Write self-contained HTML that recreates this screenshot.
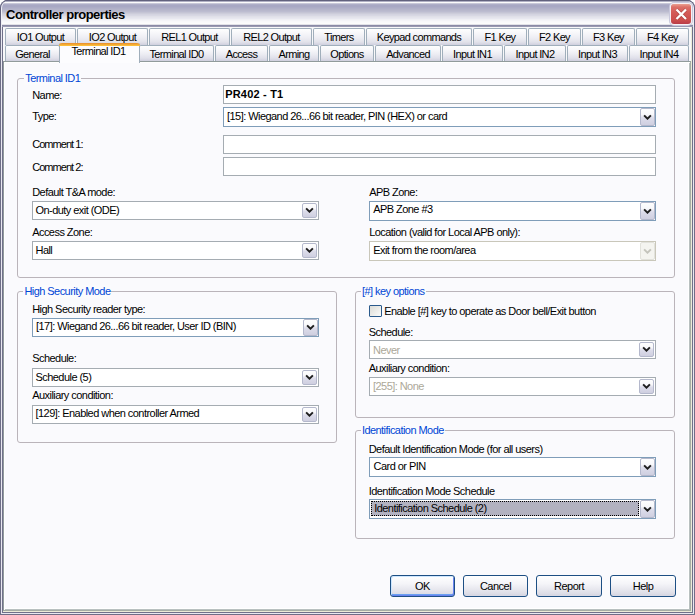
<!DOCTYPE html><html><head><meta charset="utf-8"><title>Controller properties</title><style>
*{margin:0;padding:0;box-sizing:border-box}
html,body{width:695px;height:615px;overflow:hidden;background:#fff}
body{position:relative;font-family:"Liberation Sans",sans-serif}
.t{position:absolute;font-size:11px;line-height:13px;letter-spacing:-0.55px;white-space:pre;color:#000}
.gt{color:#0046d5;background:#fbfbfd;padding:0 1px 0 1px}
.box{position:absolute;border:1px solid #a5acb2;background:#fff}
.box > *{position:absolute}
.dbtn{border:1px solid #b4b8cc;border-radius:2px;background:linear-gradient(#fefefe 0%,#f8f8fb 35%,#dcdcea 55%,#cfcfe0 100%)}
.dbtn.dis{border-color:#e2e2dc;background:#f4f4f0}
.csel{background:#b2b2c0;outline:1px dotted #000;outline-offset:-1px}
.grp{position:absolute;border:1px solid #bab4ba;border-radius:3px}
.btn{position:absolute;border:1px solid #1d4f84;border-radius:3px;background:linear-gradient(#ffffff 0%,#f4f4f8 40%,#dcdce6 90%,#cfcfdc 100%);box-shadow:inset 0 -1px 0 #d8d8e4}
.btn span{position:absolute;left:0;right:0;top:4px;text-align:center;font-size:11px;line-height:13px;letter-spacing:-0.5px}
.btn.def{box-shadow:inset 1px 1px 0 #cee7ff,inset -1px -1px 0 #6982ee,inset 0 -2px 0 #69a0f0}
.tab{position:absolute;border:1px solid #a0aebb;border-bottom:none;border-radius:2px 2px 0 0}
.tab span{position:absolute;left:0;right:0;text-align:center;font-size:11px;line-height:13px;letter-spacing:-0.65px;white-space:pre}
.tab.r1{top:28px;height:17px;background:linear-gradient(#fefefe 0px,#f7f7fa 4px,#ededf3 9px,#e2e2ea 13px,#cfcfde 16px)}
.tab.r1 span{top:2px}
.tab.r2{top:45px;height:16px;background:linear-gradient(#fefefe 0px,#f7f7fa 4px,#ededf3 8px,#e0e0ea 12px,#cfcfde 15px)}
.tab.r2 span{top:2px}
.tab.sel span{top:2.4px;right:2px}
.tab.sel{top:43px;height:20px;background:#fcfcfe;border-color:#a0aebb;border-top:none;z-index:3}
.tab.sel:before{content:"";position:absolute;left:-1px;right:-1px;top:0;height:3px;background:linear-gradient(#e68b2c,#ffc73c);border-radius:3px 3px 0 0}
</style></head><body>
<div style="position:absolute;left:0;top:0;width:695px;height:615px;background:#6e6e86;border-radius:8px 8px 0 0"></div>
<div style="position:absolute;left:1px;top:1px;width:693px;height:613px;background:#e8e8f0;border-radius:7px 7px 0 0"></div>
<div style="position:absolute;left:2px;top:2px;width:691px;height:611px;background:#70708a;border-radius:6px 6px 0 0"></div>
<div style="position:absolute;left:0px;top:0px;width:695px;height:27px;border-radius:8px 8px 0 0;background:linear-gradient(#5a5a78 0px 1px,#b0b0c4 1px 2px,#fbfbfc 2px 3px,#c8c8d8 3px 4px,#aeaec8 4px 5px,#a8a8c4 5px 6px,#a8a8c4 6px 7px,#acacc6 7px 8px,#b0b0c8 8px 9px,#b4b4ca 9px 10px,#b8b8cc 10px 11px,#bcbcd0 11px 12px,#c4c4d4 12px 13px,#ccccda 13px 14px,#d4d4e0 14px 15px,#d8d8e4 15px 16px,#e0e0e8 16px 17px,#e4e4ec 17px 18px,#e8e8f0 18px 19px,#f0f0f4 19px 20px,#f4f4f8 20px 21px,#f8f8fa 21px 22px,#fafafc 22px 23px,#fcfcfc 23px 24px,#e2e2e8 24px 25px,#8a8aa6 25px 26px,#9a9ab2 26px 27px)"></div>
<div style="position:absolute;left:0;top:0;width:695px;height:27px;border:1px solid #62627e;border-bottom:none;border-radius:8px 8px 0 0"></div>
<div style="position:absolute;left:1px;top:1px;width:693px;height:26px;border:1px solid #f0f0f6;border-bottom:none;border-top:none;border-radius:7px 7px 0 0"></div>
<div style="position:absolute;left:6px;top:6.5px;font-size:13px;line-height:16px;letter-spacing:-0.5px;font-weight:bold;color:#000;white-space:pre">Controller properties</div>
<div style="position:absolute;left:671px;top:4px;width:20px;height:20px;border-radius:3px;background:linear-gradient(#eba090 0px,#dc7068 3px,#d45c58 8px,#cc4e4c 16px,#b83c48 20px);box-shadow:0 0 0 1px #f6f0f4,0 0 0 2px #c8c8dc"></div>
<svg style="position:absolute;left:671px;top:4px" width="20" height="20"><path d="M5.5 5.5 L15 15 M15 5.5 L5.5 15" stroke="#6a2020" stroke-opacity="0.35" stroke-width="3.4"/><path d="M5.5 5.5 L15 15 M15 5.5 L5.5 15" stroke="#fff" stroke-width="2.3"/></svg>
<div style="position:absolute;left:3px;top:27px;width:689px;height:585px;background:#f8f8fa"></div>
<div style="position:absolute;left:691px;top:27px;width:1px;height:585px;background:#ecebd8"></div>
<div style="position:absolute;left:3px;top:611px;width:689px;height:1px;background:#ecebd8"></div>
<div style="position:absolute;left:3px;top:61px;width:688px;height:550px;border:1px solid #919b9c;border-right:1px solid #a4aca4;border-bottom:1px solid #a4aca4;background:#fafafd;box-shadow:inset 1px 1px 0 #fff,inset -1px -1px 0 #b8c0c0,inset -2px -2px 0 #fff"></div>
<div class="tab r1" style="left:5px;width:71px"><span>IO1 Output</span></div>
<div class="tab r1" style="left:77px;width:71px"><span>IO2 Output</span></div>
<div class="tab r1" style="left:149px;width:81px"><span>REL1 Output</span></div>
<div class="tab r1" style="left:231px;width:81px"><span>REL2 Output</span></div>
<div class="tab r1" style="left:313px;width:52px"><span>Timers</span></div>
<div class="tab r1" style="left:366px;width:106px"><span>Keypad commands</span></div>
<div class="tab r1" style="left:473px;width:54px"><span>F1 Key</span></div>
<div class="tab r1" style="left:528px;width:53px"><span>F2 Key</span></div>
<div class="tab r1" style="left:582px;width:53px"><span>F3 Key</span></div>
<div class="tab r1" style="left:636px;width:53px"><span>F4 Key</span></div>
<div class="tab r2" style="left:5px;width:55px"><span>General</span></div>
<div class="tab r2" style="left:139px;width:75px"><span>Terminal ID0</span></div>
<div class="tab r2" style="left:215px;width:53px"><span>Access</span></div>
<div class="tab r2" style="left:269px;width:50px"><span>Arming</span></div>
<div class="tab r2" style="left:320px;width:54px"><span>Options</span></div>
<div class="tab r2" style="left:375px;width:66px"><span>Advanced</span></div>
<div class="tab r2" style="left:442px;width:61px"><span>Input IN1</span></div>
<div class="tab r2" style="left:504px;width:62px"><span>Input IN2</span></div>
<div class="tab r2" style="left:567px;width:61px"><span>Input IN3</span></div>
<div class="tab r2" style="left:629px;width:60px"><span>Input IN4</span></div>
<div class="tab sel" style="left:59px;width:81px"><span>Terminal ID1</span></div>
<div class="grp" style="left:17px;top:78px;width:658px;height:200px"></div>
<div class="t gt" style="left:24.2px;top:72.1px;">Terminal ID1</div>
<div class="t" style="left:32.2px;top:88.5px;">Name:</div>
<div class="t" style="left:32.2px;top:110.1px;">Type:</div>
<div class="t" style="left:32.2px;top:138.3px;letter-spacing:-0.95px">Comment 1:</div>
<div class="t" style="left:32.2px;top:160.5px;letter-spacing:-0.95px">Comment 2:</div>
<div class="box" style="left:223px;top:85px;width:433px;height:19px;border-color:#a5acb2"></div>
<div class="t" style="left:225.2px;top:87.7px;letter-spacing:0.2px"><b>PR402 - T1</b></div>
<div class="box" style="left:223px;top:107px;width:433px;height:20px;border-color:#7f9db9;background:#fff">
<div class="dbtn" style="left:416px;top:0px;width:15px;height:18px"></div>
<svg width="9" height="6" viewBox="0 0 9 6" style="position:absolute;left:419px;top:6px"><path d="M1.1 1.3 L4.5 4.7 L7.9 1.3" fill="none" stroke="#1e1e1e" stroke-width="1.9"/></svg>
</div>
<div class="t" style="left:227.0px;top:110.0px;color:#000">[15]: Wiegand 26...66 bit reader, PIN (HEX) or card</div>
<div class="box" style="left:223px;top:135px;width:433px;height:19px;border-color:#a5acb2"></div>
<div class="box" style="left:223px;top:157px;width:433px;height:19px;border-color:#a5acb2"></div>
<div class="t" style="left:32.2px;top:185.6px;">Default T&amp;A mode:</div>
<div class="box" style="left:32px;top:201px;width:287px;height:19px;border-color:#a5acb2;background:#fff">
<div class="dbtn" style="left:269px;top:1px;width:15px;height:15px"></div>
<svg width="9" height="6" viewBox="0 0 9 6" style="position:absolute;left:272px;top:5px"><path d="M1.1 1.3 L4.5 4.7 L7.9 1.3" fill="none" stroke="#1e1e1e" stroke-width="1.9"/></svg>
</div>
<div class="t" style="left:35.5px;top:204.0px;color:#000">On-duty exit (ODE)</div>
<div class="t" style="left:32.2px;top:225.7px;">Access Zone:</div>
<div class="box" style="left:32px;top:241px;width:287px;height:19px;border-color:#a5acb2;background:#fff">
<div class="dbtn" style="left:269px;top:1px;width:15px;height:15px"></div>
<svg width="9" height="6" viewBox="0 0 9 6" style="position:absolute;left:272px;top:5px"><path d="M1.1 1.3 L4.5 4.7 L7.9 1.3" fill="none" stroke="#1e1e1e" stroke-width="1.9"/></svg>
</div>
<div class="t" style="left:35.5px;top:244.3px;color:#000">Hall</div>
<div class="t" style="left:369.2px;top:185.6px;">APB Zone:</div>
<div class="box" style="left:369px;top:201px;width:287px;height:20px;border-color:#7f9db9;background:#fff">
<div class="dbtn" style="left:270px;top:0px;width:15px;height:18px"></div>
<svg width="9" height="6" viewBox="0 0 9 6" style="position:absolute;left:273px;top:6px"><path d="M1.1 1.3 L4.5 4.7 L7.9 1.3" fill="none" stroke="#1e1e1e" stroke-width="1.9"/></svg>
</div>
<div class="t" style="left:373.2px;top:203.4px;color:#000">APB Zone #3</div>
<div class="t" style="left:369.2px;top:226.1px;">Location (valid for Local APB only):</div>
<div class="box" style="left:369px;top:241px;width:287px;height:20px;border-color:#c9c7ba;background:#fff">
<div class="dbtn dis" style="left:270px;top:0px;width:15px;height:18px"></div>
<svg width="9" height="6" viewBox="0 0 9 6" style="position:absolute;left:273px;top:6px"><path d="M1.1 1.3 L4.5 4.7 L7.9 1.3" fill="none" stroke="#c4c4bc" stroke-width="1.9"/></svg>
</div>
<div class="t" style="left:373.2px;top:244.0px;color:#000">Exit from the room/area</div>
<div class="grp" style="left:17px;top:291px;width:320px;height:152px"></div>
<div class="t gt" style="left:23.4px;top:284.7px;">High Security Mode</div>
<div class="t" style="left:32.2px;top:302.8px;">High Security reader type:</div>
<div class="box" style="left:32px;top:318px;width:287px;height:19px;border-color:#7f9db9;background:#fff">
<div class="dbtn" style="left:270px;top:0px;width:15px;height:17px"></div>
<svg width="9" height="6" viewBox="0 0 9 6" style="position:absolute;left:273px;top:5px"><path d="M1.1 1.3 L4.5 4.7 L7.9 1.3" fill="none" stroke="#1e1e1e" stroke-width="1.9"/></svg>
</div>
<div class="t" style="left:36.0px;top:320.1px;color:#000">[17]: Wiegand 26...66 bit reader, User ID (BIN)</div>
<div class="t" style="left:32.2px;top:352.1px;">Schedule:</div>
<div class="box" style="left:32px;top:368px;width:287px;height:19px;border-color:#a5acb2;background:#fff">
<div class="dbtn" style="left:269px;top:1px;width:15px;height:15px"></div>
<svg width="9" height="6" viewBox="0 0 9 6" style="position:absolute;left:272px;top:5px"><path d="M1.1 1.3 L4.5 4.7 L7.9 1.3" fill="none" stroke="#1e1e1e" stroke-width="1.9"/></svg>
</div>
<div class="t" style="left:35.5px;top:370.7px;color:#000">Schedule (5)</div>
<div class="t" style="left:32.2px;top:389.2px;">Auxiliary condition:</div>
<div class="box" style="left:32px;top:405px;width:287px;height:19px;border-color:#a5acb2;background:#fff">
<div class="dbtn" style="left:269px;top:1px;width:15px;height:15px"></div>
<svg width="9" height="6" viewBox="0 0 9 6" style="position:absolute;left:272px;top:5px"><path d="M1.1 1.3 L4.5 4.7 L7.9 1.3" fill="none" stroke="#1e1e1e" stroke-width="1.9"/></svg>
</div>
<div class="t" style="left:35.5px;top:407.0px;color:#000">[129]: Enabled when controller Armed</div>
<div class="grp" style="left:355px;top:291px;width:320px;height:127px"></div>
<div class="t gt" style="left:360.9px;top:285.3px;">[#] key options</div>
<div style="position:absolute;left:369px;top:305px;width:13px;height:12px;border:1px solid #2a5a8c;border-radius:1px;background:linear-gradient(135deg,#dcdcd7,#fbfbf9)"></div>
<div class="t" style="left:384.2px;top:305.4px;">Enable [#] key to operate as Door bell/Exit button</div>
<div class="t" style="left:368.7px;top:325.7px;">Schedule:</div>
<div class="box" style="left:369px;top:340px;width:287px;height:19px;border-color:#a5acb2;background:#fff">
<div class="dbtn" style="left:269px;top:1px;width:15px;height:15px"></div>
<svg width="9" height="6" viewBox="0 0 9 6" style="position:absolute;left:272px;top:5px"><path d="M1.1 1.3 L4.5 4.7 L7.9 1.3" fill="none" stroke="#1e1e1e" stroke-width="1.9"/></svg>
</div>
<div class="t" style="left:373.0px;top:343.5px;color:#aca899">Never</div>
<div class="t" style="left:368.7px;top:361.8px;">Auxiliary condition:</div>
<div class="box" style="left:369px;top:377px;width:287px;height:19px;border-color:#a5acb2;background:#fff">
<div class="dbtn" style="left:269px;top:1px;width:15px;height:15px"></div>
<svg width="9" height="6" viewBox="0 0 9 6" style="position:absolute;left:272px;top:5px"><path d="M1.1 1.3 L4.5 4.7 L7.9 1.3" fill="none" stroke="#1e1e1e" stroke-width="1.9"/></svg>
</div>
<div class="t" style="left:373.0px;top:379.9px;color:#aca899">[255]: None</div>
<div class="grp" style="left:355px;top:430px;width:320px;height:109px"></div>
<div class="t gt" style="left:360.9px;top:424.3px;">Identification Mode</div>
<div class="t" style="left:368.7px;top:442.5px;">Default Identification Mode (for all users)</div>
<div class="box" style="left:369px;top:457px;width:287px;height:20px;border-color:#7f9db9;background:#fff">
<div class="dbtn" style="left:270px;top:0px;width:15px;height:18px"></div>
<svg width="9" height="6" viewBox="0 0 9 6" style="position:absolute;left:273px;top:6px"><path d="M1.1 1.3 L4.5 4.7 L7.9 1.3" fill="none" stroke="#1e1e1e" stroke-width="1.9"/></svg>
</div>
<div class="t" style="left:373.6px;top:460.0px;color:#000">Card or PIN</div>
<div class="t" style="left:368.7px;top:484.8px;">Identification Mode Schedule</div>
<div class="box" style="left:369px;top:499px;width:287px;height:20px;border-color:#7f9db9;background:#fff">
<div class="dbtn" style="left:270px;top:0px;width:15px;height:18px"></div>
<svg width="9" height="6" viewBox="0 0 9 6" style="position:absolute;left:273px;top:6px"><path d="M1.1 1.3 L4.5 4.7 L7.9 1.3" fill="none" stroke="#1e1e1e" stroke-width="1.9"/></svg>
<div class="csel" style="left:1px;top:1px;width:268px;height:15px"></div>
</div>
<div class="t" style="left:374.2px;top:501.7px;color:#000">Identification Schedule (2)</div>
<div class="btn def" style="left:390px;top:575px;width:65px;height:22px"><span>OK</span></div>
<div class="btn" style="left:463px;top:575px;width:65px;height:22px"><span>Cancel</span></div>
<div class="btn" style="left:536px;top:575px;width:66px;height:22px"><span>Report</span></div>
<div class="btn" style="left:610px;top:575px;width:66px;height:22px"><span>Help</span></div>
</body></html>
